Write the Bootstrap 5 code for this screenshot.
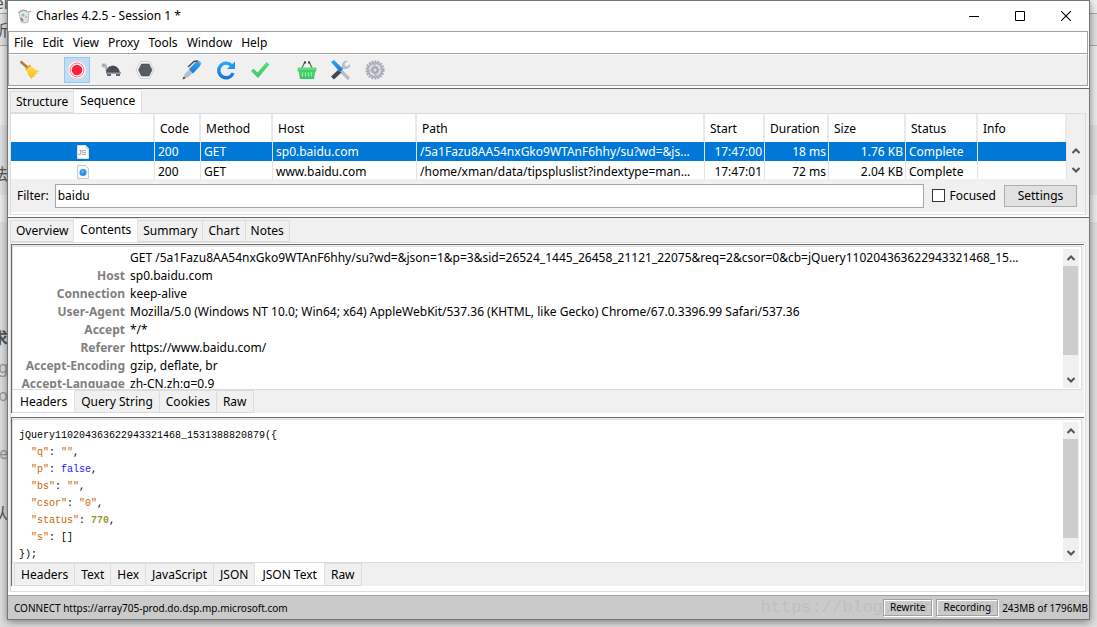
<!DOCTYPE html>
<html lang="en">
<head>
<meta charset="utf-8">
<meta name="viewport" content="width=device-width, initial-scale=1">
<title>Charles 4.2.5 - Session 1 *</title>
<link href="https://cdn.jsdelivr.net/npm/bootstrap@5.3.0/dist/css/bootstrap.min.css" rel="stylesheet">
<style>
:root{--face:#f0f0f0;--line:#dcdcdc;--dark:#696969;--mid:#a0a0a0;--sel:#0078d7}
body{font:12px/18px "Noto Sans","Noto Sans CJK SC",sans-serif;color:#000;background:#e3e3e3}
.desktop{height:100vh;padding:0 7px 7px;position:relative;overflow:hidden;
 background:linear-gradient(#f0f0f0 0 13px,#a8a8a8 13px 14px,#e2e2e2 14px 45px,#a8a8a8 45px 46px,#ececec 46px 125px,#e0e0e0 125px 195px,#ececec 195px 222px,#dedede 222px)}
.behind{position:absolute;left:0;top:0;width:8px;height:100%;overflow:hidden;color:#555;font-size:16px}
.behind span{position:absolute;right:0;line-height:16px}
.behind .pale{color:#999}
.app{position:relative;background:#fff;border:1px solid #6c7a73;box-shadow:0 2px 8px rgba(0,0,0,.45);height:100%}
.titlebar{height:30px;padding-left:8px}
.titlebar h1{font-size:12px;line-height:18px;margin:0;font-weight:400}
.winbtn{border:0;background:none;width:46px;height:30px;padding:0;display:flex;align-items:center;justify-content:center}
.menus{height:23px;border:solid var(--mid);border-width:1px;padding:1px 0 0 5px;margin-right:1px;gap:9px}
.menus a{color:#000;text-decoration:none}
.tools{height:32px;background:var(--face);border:solid var(--mid);border-width:0 1px 1px;margin-right:1px;padding:0 8px;box-shadow:inset 0 1px #fff}
.tool{width:26px;height:26px;border:1px solid transparent;background:none;padding:0;margin-right:8px;display:flex;align-items:center;justify-content:center}
.tool.on{background:#c2dcf3;border-color:#90c8f6}
.tool.gap{margin-right:21px}
.sec{margin-top:2px;border-top:1px solid var(--dark);background:var(--face);padding:0 2px}
.nav-tabs{border:0;padding-left:1px}
.nav-tabs .nav-link{border:1px solid var(--line);border-radius:0;margin:0;color:#000;background:var(--face);padding:0 5px;line-height:20px;height:22px;margin-left:-1px;white-space:nowrap}
.nav-tabs .nav-link.active{background:#fff;color:#000;height:24px;padding:0 6px;line-height:20px;border-bottom-color:#fff;position:relative}
.tabs-top{align-items:flex-end}
.nav-tabs.tabs-bot .nav-link{padding:0 6px;height:23px}
.nav-tabs.tabs-bot .nav-link.active{border-top-color:#fff;border-bottom-color:var(--line);line-height:22px;padding:0 7px}
.nav-tabs.inset{padding-left:3px}
.sheet{border:1px solid var(--line);background:#fff;margin-right:1px;padding-bottom:2px}
.view{height:65px;overflow:hidden}
.grid{table-layout:fixed;width:100%;border-collapse:separate;border-spacing:0;background:#fff}
.grid th{height:28px;font-weight:400;padding:2px 5px 0 5px;border-right:2px solid #e9e9e9}
.grid td{height:19px;line-height:19px;padding:0 2px 0 3px;border-right:1px solid #e4e4e4;white-space:nowrap;overflow:hidden;text-overflow:ellipsis}
.grid tr.spaced td{border-top:1px solid #fff;height:20px}
.grid .picked td{background:var(--sel);color:#fff}
.c-ic{width:144px}.c-code{width:46px}.c-meth{width:72px}.c-host{width:144px}.c-start{width:60px}.c-dur{width:64px}.c-size{width:77px}.c-stat{width:72px}.c-info{width:89px}
.grid svg{display:block;margin:auto}
.sb{width:16px;background:var(--face);flex:none}
.view .sb{width:18px}
.sb button{border:0;background:none;padding:0;width:16px;height:17px;display:flex;align-items:center;justify-content:center}
.view .sb button{width:18px;height:19px}
.sb .rail{flex:1}
.sb .thumb{background:#cdcdcd;width:15px}
.filter{background:var(--face);height:33px;padding:0 8px 0 6px}
.filter input[type=text]{height:24px;border:1px solid #a5a5ab;border-radius:0;padding:0 2px;margin-left:6px;font-size:12px;line-height:18px;color:#000;min-height:0}
.filter .form-check-input{width:13px;height:13px;border:1px solid #333;border-radius:0;margin:0}
.set{height:22px;width:73px;border:1px solid #adadad;background:#e1e1e1;padding:0}
.pane{border:solid var(--dark);border-width:1px 0 0 1px;flex:1 1 0;min-height:0;margin-right:1px;background:var(--face);display:flex;flex-direction:column}
.stack{padding:1px 0 5px;gap:4px}
.inner{border:1px solid var(--line);margin:1px 2px 0 0;background:#fff;flex:1 1 0;min-height:0;display:flex;padding:2px 2px 1px 0}
.hdrs{display:grid;grid-template-columns:112px minmax(0,1fr);grid-auto-rows:18px;column-gap:5px;margin:0;overflow:hidden;flex:1;align-content:start}
.hdrs dt{color:#808080;font-weight:700;text-align:right;white-space:nowrap;line-height:18px}
.hdrs dd{margin:0;white-space:nowrap;overflow:hidden;text-overflow:ellipsis;padding-right:3px}
.code{font:10px/17px "Liberation Mono",monospace;margin:0;padding:5px 0 0 6px;overflow:hidden;flex:1}
.k{color:#cc6600}.b{color:#1a1aff}.n{color:#999933;font-weight:700}
.status{background:#cacaca;border-top:1px solid var(--mid);height:24px;font-size:10px;line-height:14px;padding:0 1px 0 6px;margin-top:3px;position:relative}
.status button{border:1px solid #a0a0a0;box-shadow:1px 1px #fff,inset 1px 1px #fff;background:none;padding:0 6px;height:17px;line-height:15px}
.wm{position:absolute;right:2px;top:2px;font:17px/20px "Liberation Mono",monospace;color:#c0c0b8;pointer-events:none}
</style>
</head>
<body>
<div class="desktop">
<div class="behind" aria-hidden="true">
<span style="top:-5px">el</span><span style="top:22px">所</span><span style="top:166px">法</span><span class="fw-bold" style="top:330px">求</span><span class="pale" style="top:359px">g</span><span class="pale" style="top:387px">o</span><span class="pale" style="top:445px">e</span><span style="top:505px">从</span>
</div>
<main class="app d-flex flex-column">
<header class="titlebar d-flex align-items-center">
<svg width="16" height="16" viewBox="0 0 16 16" class="me-1"><path d="M3 4Q8 1 13 4L12 14Q8 16 5 14Z" fill="#e1e6e4" stroke="#b3bab7"/><path d="M4 3Q7 1 11 3M13 4l2-1M4 5L2 4" stroke="#999" fill="none"/><circle cx="7" cy="7" r="1.500" fill="#87c49a"/><circle cx="10" cy="9" r="1.200" fill="#e6a0c4"/><path d="M5 10l2 3" stroke="#777" stroke-width="1.500"/></svg>
<h1 class="flex-grow-1">Charles 4.2.5 - Session 1 *</h1>
<button class="winbtn" aria-label="Minimize"><svg width="10" height="10"><path d="M0 5.500h10" stroke="#000"/></svg></button>
<button class="winbtn" aria-label="Maximize"><svg width="10" height="10"><path d="M.5.5h9v9h-9z" stroke="#000" fill="none"/></svg></button>
<button class="winbtn" aria-label="Close"><svg width="10" height="10"><path d="M0 0l10 10M10 0L0 10" stroke="#000" stroke-width="1.100"/></svg></button>
</header>
<nav class="menus d-flex align-items-center"><a href="#">File</a><a href="#">Edit</a><a href="#">View</a><a href="#">Proxy</a><a href="#">Tools</a><a href="#">Window</a><a href="#">Help</a></nav>
<div class="tools d-flex align-items-center">
<svg width="0" height="0" class="position-absolute"><defs><linearGradient id="gy" x2="0" y2="1"><stop stop-color="#ffdf55"/><stop offset="1" stop-color="#f9b71c"/></linearGradient><linearGradient id="gb" x2="0" y2="1"><stop stop-color="#27a9f5"/><stop offset="1" stop-color="#1478e0"/></linearGradient><linearGradient id="gg" x2="0" y2="1"><stop stop-color="#5be37d"/><stop offset="1" stop-color="#3cc468"/></linearGradient></defs></svg>
<button class="tool gap" aria-label="Clear"><svg width="20" height="20" viewBox="0 0 20 20"><path d="M.5 1.500L8 8" stroke="#b5793a" stroke-width="2.600"/><path d="M10 5.500L6 9.500Q7.500 15 11.500 19L13 16.500L14 17.500L15 14.500L17 14L16.500 12.500L19.500 11.500Q14 9 10 5.500Z" fill="url(#gy)"/><path d="M5.500 9.500L10.500 5" stroke="#e7a220" stroke-width="1.500"/></svg></button>
<button class="tool on" aria-label="Record"><svg width="20" height="20" viewBox="0 0 20 20"><circle cx="10" cy="10" r="9" fill="#fff" stroke="#e3d7df"/><circle cx="10" cy="10" r="7" fill="#fff" stroke="#ff6b7b" stroke-width="1"/><circle cx="10" cy="10" r="5.300" fill="#ff1f3d"/></svg></button>
<button class="tool" aria-label="Throttle"><svg width="20" height="20" viewBox="0 0 20 20"><path d="M.5 4Q4 2 6 5L7 11L10 13H6Q4 11 4 8L1 7Z" fill="#b4bac4"/><circle cx="2.800" cy="5" r=".6" fill="#555"/><path d="M5 13Q5 6 12 5.500Q18 6 19 13Z" fill="#4c5059"/><path d="M8 7l3 2 4-2M11 9v4M15 8l2 4" stroke="#383b43" fill="none" stroke-width=".7"/><path d="M5 13h15" stroke="#7d828c" stroke-width="1.500"/><path d="M6 14h4v2H6zM15 14h4v2h-4z" fill="#62666f"/></svg></button>
<button class="tool gap" aria-label="Breakpoints"><svg width="20" height="20" viewBox="0 0 20 20"><path d="M5.500 1.500h9L19 10l-4.500 8.500h-9L1 10Z" fill="#f8f8f8" stroke="#cdd0d6"/><path d="M6.500 4h7.500L17 10l-3 6H6.500L3.500 10Z" fill="#575b64" stroke="#41444c" stroke-width=".6"/></svg></button>
<button class="tool" aria-label="Compose"><svg width="20" height="20" viewBox="0 0 20 20"><path d="M.5 19.500L3 13.500L9 8L12.500 11.500L6.500 17Z" fill="#b7bdc8"/><path d="M.5 19.500l1.300-2.900 1.600 1.600Z" fill="#333"/><path d="M7 9L14.500 1.500Q17 .5 18.500 2Q19.500 4 18 6L11 13.500Z" fill="url(#gb)"/><path d="M6 7L12 1.500L16 1" stroke="#444952" stroke-width="1.400" fill="none"/><path d="M16 1l3 3" stroke="#9ca6b2" stroke-width="1.500"/></svg></button>
<button class="tool" aria-label="Repeat"><svg width="20" height="20" viewBox="0 0 20 20"><path d="M15.500 5.500A7.300 7.300 0 1 0 17 13" fill="none" stroke="url(#gb)" stroke-width="3.400"/><path d="M19 1.500V9H11Z" fill="#1d9af1"/></svg></button>
<button class="tool gap" aria-label="Validate"><svg width="20" height="20" viewBox="0 0 20 20"><path d="M1 11L3.500 8.500L7.500 12.500L16.500 2L19.500 4.500L8 18Z" fill="url(#gg)"/></svg></button>
<button class="tool" aria-label="Tools basket"><svg width="20" height="20" viewBox="0 0 20 20"><path d="M4.500 9L8 1.500M15.500 9L12 1.500" stroke="#666b74" stroke-width="1.300"/><path d="M7 2.500h2M11 2.500h2" stroke="#444" stroke-width="2"/><path d="M.5 7.500h19v3.500h-1L17 19H3L1.500 11H.5Z" fill="url(#gg)"/><path d="M5.500 12.500v4M8.500 12.500v4M11.500 12.500v4M14.500 12.500v4" stroke="#a0edb4" stroke-width="1"/><path d="M1 11h18" stroke="#36ac5c" stroke-width=".7"/></svg></button>
<button class="tool" aria-label="Settings tools"><svg width="20" height="20" viewBox="0 0 20 20"><path d="M9 10l9 9" stroke="#b4bcc8" stroke-width="3.200"/><path d="M1.500 18L9 11" stroke="#42464f" stroke-width="4.200"/><path d="M8 11l5-5" stroke="#b6beca" stroke-width="2.500"/><path d="M17 1Q12 0 11 5q0 4.500 4 4Q20 8 19 4L16 6.500l-2.500-1 .5-2.500Z" fill="#b6beca"/><path d="M0 2L3 0L12 9L9 12Z" fill="url(#gb)"/></svg></button>
<button class="tool" aria-label="Preferences"><svg width="20" height="20" viewBox="0 0 20 20"><circle cx="10" cy="10" r="8.700" fill="none" stroke="#a6abb7" stroke-width="1.800" stroke-dasharray="1.900 1.200"/><circle cx="10" cy="10" r="7.800" fill="#b1b6c1" stroke="#a0a6b2" stroke-width=".8"/><circle cx="10" cy="10" r="5" fill="none" stroke="#e4e6eb" stroke-width="1.500" stroke-dasharray="6 1.850"/><circle cx="10" cy="10" r="2.300" fill="#d9dce3" stroke="#8f96a3"/></svg></button>
</div>

<section class="sec">
<div class="nav nav-tabs tabs-top" role="tablist"><button class="nav-link" role="tab">Structure</button><button class="nav-link active" role="tab" aria-selected="true">Sequence</button></div>
<div class="sheet">
<div class="d-flex view">
<table class="grid">
<colgroup><col class="c-ic"><col class="c-code"><col class="c-meth"><col class="c-host"><col><col class="c-start"><col class="c-dur"><col class="c-size"><col class="c-stat"><col class="c-info"></colgroup>
<thead><tr><th></th><th>Code</th><th>Method</th><th>Host</th><th>Path</th><th>Start</th><th>Duration</th><th>Size</th><th>Status</th><th>Info</th></tr></thead>
<tbody>
<tr class="picked"><td><svg width="12" height="14"><path d="M.5.5h8l3 3v10H.5z" fill="#fff" stroke="#dde3ea"/><path d="M8.500 0v4h4" fill="#cfd8e2"/><text x="1" y="10" font-size="7" fill="#777" font-family="Liberation Sans">JS</text></svg></td><td>200</td><td>GET</td><td>sp0.baidu.com</td><td>/5a1Fazu8AA54nxGko9WTAnF6hhy/su?wd=&amp;js...</td><td class="text-end">17:47:00</td><td class="text-end">18 ms</td><td class="text-end">1.76 KB</td><td>Complete</td><td></td></tr>
<tr class="spaced"><td><svg width="12" height="14"><path d="M.5.5h8l3 3v10H.5z" fill="#f4f7fb" stroke="#c3cbd6"/><circle cx="6" cy="7.500" r="3.500" fill="#2f8fe0"/><circle cx="5.500" cy="6.500" r="1.500" fill="#64b6f5"/></svg></td><td>200</td><td>GET</td><td>www.baidu.com</td><td>/home/xman/data/tipspluslist?indextype=man...</td><td class="text-end">17:47:01</td><td class="text-end">72 ms</td><td class="text-end">2.04 KB</td><td>Complete</td><td></td></tr>
</tbody></table>
<div class="sb d-flex flex-column justify-content-end"><button aria-label="Up"><svg width="8" height="6"><path d="M.5 5L4 1.500L7.500 5" fill="none" stroke="#555" stroke-width="2"/></svg></button><button aria-label="Down"><svg width="8" height="6"><path d="M.5 1L4 4.500L7.500 1" fill="none" stroke="#555" stroke-width="2"/></svg></button></div>
</div>
<div class="filter d-flex align-items-center">
<label for="flt">Filter:</label><input id="flt" type="text" class="form-control flex-grow-1 w-auto" value="baidu">
<div class="d-flex align-items-center ms-2"><input class="form-check-input" type="checkbox" id="foc"><label for="foc" class="ms-1">Focused</label></div>
<button class="set ms-2">Settings</button>
</div>
</div>
</section>

<section class="sec flex-grow-1 d-flex flex-column">
<div class="nav nav-tabs tabs-top" role="tablist"><button class="nav-link" role="tab">Overview</button><button class="nav-link active" role="tab" aria-selected="true">Contents</button><button class="nav-link" role="tab">Summary</button><button class="nav-link" role="tab">Chart</button><button class="nav-link" role="tab">Notes</button></div>
<div class="sheet stack flex-grow-1 d-flex flex-column">
<div class="pane">
<div class="inner">
<dl class="hdrs"><dt></dt><dd>GET /5a1Fazu8AA54nxGko9WTAnF6hhy/su?wd=&amp;json=1&amp;p=3&amp;sid=26524_1445_26458_21121_22075&amp;req=2&amp;csor=0&amp;cb=jQuery110204363622943321468_15...</dd>
<dt>Host</dt><dd>sp0.baidu.com</dd><dt>Connection</dt><dd>keep-alive</dd><dt>User-Agent</dt><dd>Mozilla/5.0 (Windows NT 10.0; Win64; x64) AppleWebKit/537.36 (KHTML, like Gecko) Chrome/67.0.3396.99 Safari/537.36</dd><dt>Accept</dt><dd>*/*</dd><dt>Referer</dt><dd>https://www.baidu.com/</dd><dt>Accept-Encoding</dt><dd>gzip, deflate, br</dd><dt>Accept-Language</dt><dd>zh-CN,zh;q=0.9</dd></dl>
<div class="sb d-flex flex-column"><button aria-label="Scroll up"><svg width="8" height="6"><path d="M.5 5L4 1.500L7.500 5" fill="none" stroke="#555" stroke-width="2"/></svg></button><div class="rail"><div class="thumb" style="height:85%"></div></div><button aria-label="Scroll down"><svg width="8" height="6"><path d="M.5 1L4 4.500L7.500 1" fill="none" stroke="#555" stroke-width="2"/></svg></button></div>
</div>
<div class="nav nav-tabs tabs-bot" role="tablist"><button class="nav-link active" role="tab" aria-selected="true">Headers</button><button class="nav-link" role="tab">Query String</button><button class="nav-link" role="tab">Cookies</button><button class="nav-link" role="tab">Raw</button></div>
</div>
<div class="pane">
<div class="inner">
<pre class="code"><span class="d-block">jQuery110204363622943321468_1531388820879({</span><span class="d-block">  <span class="k">"q"</span>: <span class="k">""</span>,</span><span class="d-block">  <span class="k">"p"</span>: <span class="b">false</span>,</span><span class="d-block">  <span class="k">"bs"</span>: <span class="k">""</span>,</span><span class="d-block">  <span class="k">"csor"</span>: <span class="k">"0"</span>,</span><span class="d-block">  <span class="k">"status"</span>: <span class="n">770</span>,</span><span class="d-block">  <span class="k">"s"</span>: []</span><span class="d-block">});</span></pre>
<div class="sb d-flex flex-column"><button aria-label="Scroll up"><svg width="8" height="6"><path d="M.5 5L4 1.500L7.500 5" fill="none" stroke="#555" stroke-width="2"/></svg></button><div class="rail"><div class="thumb" style="height:94%"></div></div><button aria-label="Scroll down"><svg width="8" height="6"><path d="M.5 1L4 4.500L7.500 1" fill="none" stroke="#555" stroke-width="2"/></svg></button></div>
</div>
<div class="nav nav-tabs tabs-bot inset" role="tablist"><button class="nav-link" role="tab">Headers</button><button class="nav-link" role="tab">Text</button><button class="nav-link" role="tab">Hex</button><button class="nav-link" role="tab">JavaScript</button><button class="nav-link" role="tab">JSON</button><button class="nav-link active" role="tab" aria-selected="true">JSON Text</button><button class="nav-link" role="tab">Raw</button></div>
</div>
</div>
</section>
<footer class="status d-flex align-items-center gap-1"><span class="flex-grow-1">CONNECT https://array705-prod.do.dsp.mp.microsoft.com</span><span class="wm">https://blog.csdn.net/u012719153</span><button class="position-relative">Rewrite</button><button class="position-relative">Recording</button><span class="position-relative">243MB of 1796MB</span></footer>
</main>
</div>
<script src="https://cdn.jsdelivr.net/npm/bootstrap@5.3.0/dist/js/bootstrap.bundle.min.js"></script>
</body>
</html>
